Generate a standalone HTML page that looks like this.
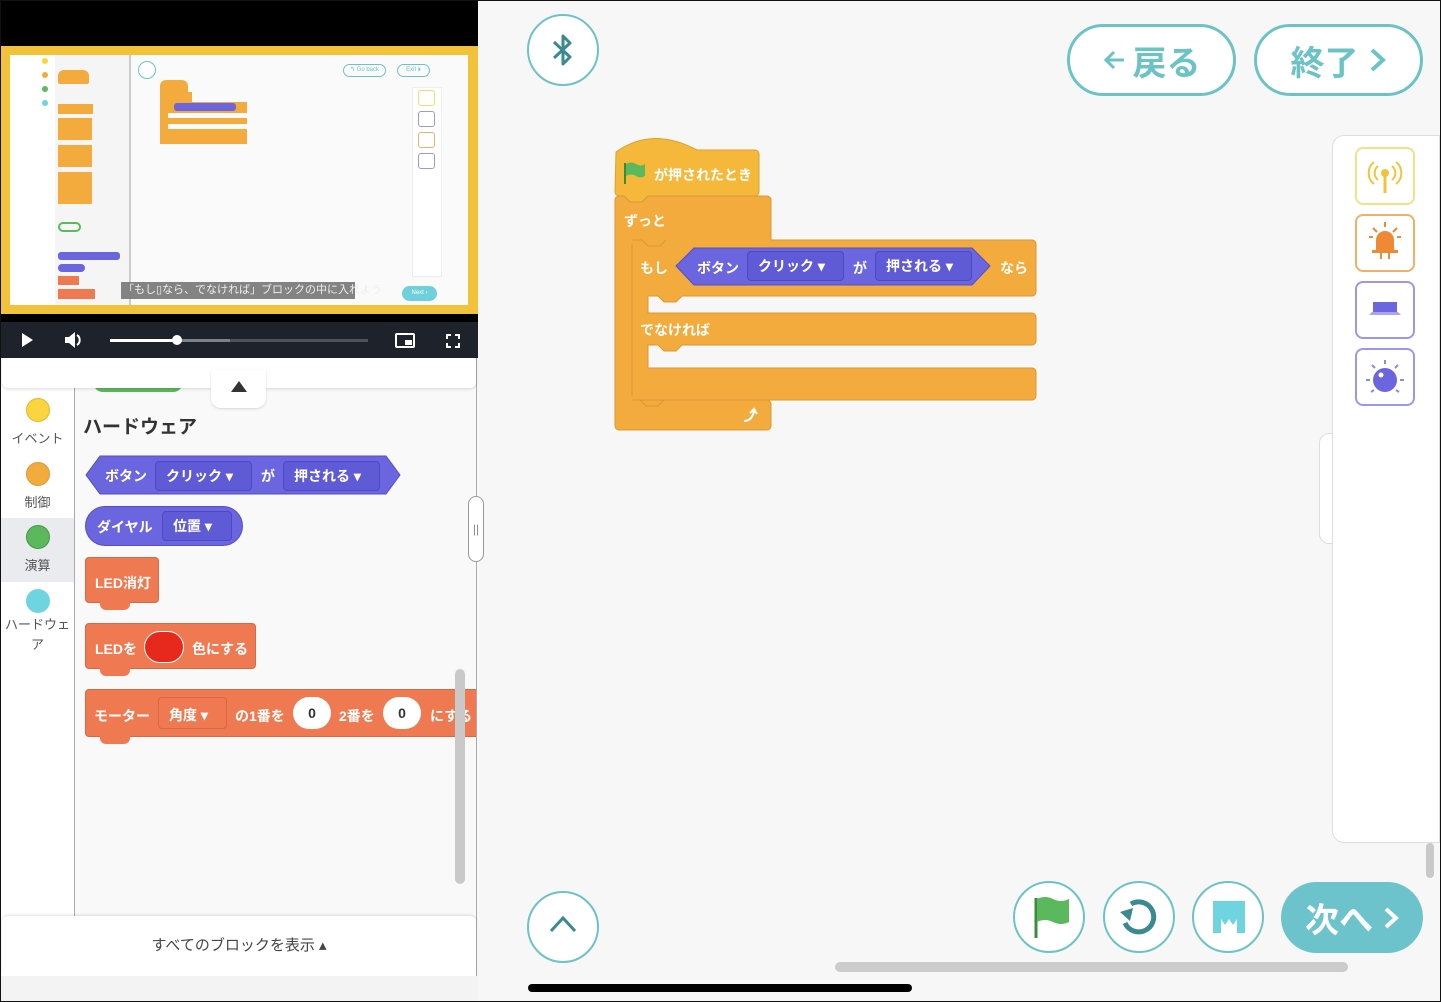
<!DOCTYPE html>
<html><head><meta charset="utf-8"><style>
*{margin:0;padding:0;box-sizing:border-box}
body{width:1441px;height:1002px;overflow:hidden;background:#f7f7f7;position:relative;font-family:"Liberation Sans","Noto Sans CJK JP",sans-serif}
.a{position:absolute}
.t{color:#fff;font-weight:bold;font-size:14px;white-space:nowrap}
.circ{border:2px solid #6cc3c6;border-radius:50%;background:#fff}
.pill{border:3px solid #6cc3c6;border-radius:40px;background:#fff;color:#6cc3c6;font-weight:bold;font-size:34px;display:flex;align-items:center;justify-content:center}
.dd{background:#5f5ad6;border:1px solid #4e49c2;border-radius:4px;height:30px;top:6px;display:flex;align-items:center;padding:0 10px;color:#fff;font-weight:bold;font-size:14px}
.cat{width:75px;text-align:center;font-size:13px;color:#555}
.cat i{display:block;width:24px;height:24px;border-radius:50%;margin:0 auto 6px}
.ib{width:60px;height:58px;border-radius:8px;background:#fff;border:2px solid}
</style></head><body>
<div class="a" style="left:0;top:0;width:1441px;height:1002px;border:1px solid #111;z-index:50;pointer-events:none"></div>

<div class="a" style="left:0;top:0;width:478px;height:1002px;background:#f9f9f9"></div>
<div class="a" style="left:0;top:0;width:75px;height:1002px;background:#fff;border-right:1px solid #aaa"></div>
<div class="a" style="left:0;top:518px;width:74px;height:64px;background:#e9ebef"></div>
<div class="a cat" style="left:0;top:398px"><i style="background:#fbd53f;border:1px solid #e0b92c"></i>イベント</div>
<div class="a cat" style="left:0;top:462px"><i style="background:#f3ab3d;border:1px solid #d99a34"></i>制御</div>
<div class="a cat" style="left:0;top:525px"><i style="background:#5cb85c;border:1px solid #3f9a3f"></i>演算</div>
<div class="a cat" style="left:0;top:589px;line-height:20px"><i style="background:#6dd4e0;margin-bottom:2px"></i>ハードウェ<br>ア</div>
<div class="a" style="left:83px;top:412px;font-size:19px;font-weight:bold;color:#333">ハードウェア</div>
<svg class="a" style="left:84px;top:455px" width="318" height="40"><polygon points="16,1 302,1 316,20 302,39 16,39 2,20" fill="#6b66e0" stroke="#544fc8"/></svg>
<div class="a t" style="left:105px;top:466px">ボタン</div>
<div class="a dd" style="left:155px;top:461px;width:97px">クリック ▾</div>
<div class="a t" style="left:261px;top:466px">が</div>
<div class="a dd" style="left:283px;top:461px;width:97px">押される ▾</div>
<div class="a" style="left:85px;top:506px;width:158px;height:40px;border-radius:20px;background:#6b66e0;border:1px solid #544fc8"></div>
<div class="a t" style="left:97px;top:517px">ダイヤル</div>
<div class="a dd" style="left:162px;top:511px;width:70px">位置 ▾</div>
<div class="a" style="left:85px;top:557px;width:74px;height:46px;background:#ef7a52;border:1px solid #d56a45;border-radius:4px"></div>
<div class="a" style="left:100px;top:602px;width:30px;height:8px;background:#ef7a52;border-radius:0 0 6px 6px"></div>
<div class="a t" style="left:95px;top:573px">LED消灯</div>
<div class="a" style="left:85px;top:623px;width:171px;height:46px;background:#ef7a52;border:1px solid #d56a45;border-radius:4px"></div>
<div class="a" style="left:100px;top:668px;width:30px;height:8px;background:#ef7a52;border-radius:0 0 6px 6px"></div>
<div class="a t" style="left:95px;top:639px">LEDを</div>
<div class="a" style="left:144px;top:631px;width:40px;height:32px;border-radius:16px;background:#e6281d;border:1px solid #fff"></div>
<div class="a t" style="left:192px;top:639px">色にする</div>
<div class="a" style="left:85px;top:689px;width:392px;height:48px;background:#ef7a52;border:1px solid #d56a45;border-radius:4px 0 0 4px"></div>
<div class="a" style="left:100px;top:736px;width:30px;height:8px;background:#ef7a52;border-radius:0 0 6px 6px"></div>
<div class="a t" style="left:94px;top:706px">モーター</div>
<div class="a" style="left:158px;top:697px;width:69px;height:32px;border:1px solid #d56a45;border-radius:4px;color:#fff;font-weight:bold;font-size:14px;padding:7px 10px">角度 ▾</div>
<div class="a t" style="left:235px;top:706px">の1番を</div>
<div class="a" style="left:293px;top:697px;width:38px;height:32px;border-radius:16px;background:#fff;font-weight:bold;font-size:14px;text-align:center;line-height:32px;color:#333">0</div>
<div class="a t" style="left:339px;top:706px">2番を</div>
<div class="a" style="left:383px;top:697px;width:38px;height:32px;border-radius:16px;background:#fff;font-weight:bold;font-size:14px;text-align:center;line-height:32px;color:#333">0</div>
<div class="a t" style="left:430px;top:706px">にする</div>
<div class="a" style="left:455px;top:669px;width:10px;height:215px;border-radius:5px;background:#c9c9c9"></div>
<div class="a" style="left:476px;top:0;width:1px;height:1002px;background:#aaa"></div>
<div class="a" style="left:468px;top:496px;width:16px;height:66px;border-radius:8px;background:#fff;border:1px solid #999;color:#888;font-size:12px;text-align:center;line-height:64px">||</div>
<div class="a" style="left:93px;top:380px;width:90px;height:12px;background:#5cb85c;border-radius:0 0 10px 10px"></div>
<div class="a" style="left:2px;top:358px;width:474px;height:30px;background:#fff;border-radius:0 0 6px 6px;box-shadow:0 1px 3px rgba(0,0,0,.15)"></div>
<div class="a" style="left:211px;top:370px;width:55px;height:38px;background:#fff;border-radius:0 0 10px 10px;box-shadow:0 1px 2px rgba(0,0,0,.15)"></div>
<div class="a" style="left:231px;top:381px;width:0;height:0;border-left:8px solid transparent;border-right:8px solid transparent;border-bottom:11px solid #333"></div>
<div class="a" style="left:2px;top:916px;width:474px;height:60px;background:#fff;border-radius:6px 6px 0 0;box-shadow:0 -1px 3px rgba(0,0,0,.12);text-align:center;font-size:15px;color:#444;line-height:60px">すべてのブロックを表示 ▴</div>

<div class="a" style="left:0;top:0;width:478px;height:322px;background:#000"></div>
<div class="a" style="left:0;top:46px;width:478px;height:268px;background:#f2c23a"></div>
<div class="a" style="left:10px;top:55px;width:458px;height:250px;background:#fafafa"></div>
<div class="a" style="left:10px;top:55px;width:45px;height:250px;background:#fff"></div>
<div class="a" style="left:55px;top:55px;width:76px;height:250px;background:#f5f5f5;border-right:2px solid #ccc"></div>
<div class="a" style="left:42px;top:58px;width:6px;height:6px;border-radius:50%;background:#fbd53f"></div>
<div class="a" style="left:42px;top:72px;width:6px;height:6px;border-radius:50%;background:#f3ab3d"></div>
<div class="a" style="left:42px;top:86px;width:6px;height:6px;border-radius:50%;background:#5cb85c"></div>
<div class="a" style="left:42px;top:100px;width:6px;height:6px;border-radius:50%;background:#6dd4e0"></div>
<div class="a" style="left:58px;top:70px;width:31px;height:14px;background:#f3ab3d;border-radius:6px 6px 2px 2px"></div>
<div class="a" style="left:58px;top:104px;width:35px;height:10px;background:#f3ab3d"></div>
<div class="a" style="left:58px;top:118px;width:34px;height:22px;background:#f3ab3d"></div>
<div class="a" style="left:58px;top:145px;width:34px;height:22px;background:#f3ab3d"></div>
<div class="a" style="left:58px;top:172px;width:34px;height:32px;background:#f3ab3d"></div>
<div class="a" style="left:58px;top:222px;width:23px;height:10px;border:2px solid #5cb85c;border-radius:5px"></div>
<div class="a" style="left:58px;top:252px;width:62px;height:8px;background:#6b66e0;border-radius:3px"></div>
<div class="a" style="left:58px;top:264px;width:27px;height:8px;background:#6b66e0;border-radius:4px"></div>
<div class="a" style="left:58px;top:276px;width:21px;height:9px;background:#ef7a52"></div>
<div class="a" style="left:58px;top:289px;width:37px;height:10px;background:#ef7a52"></div>
<div class="a circ" style="left:138px;top:61px;width:18px;height:18px;border-width:1px"></div>
<div class="a" style="left:160px;top:80px;width:28px;height:12px;background:#f3ab3d;border-radius:6px 6px 0 0"></div>
<div class="a" style="left:160px;top:92px;width:32px;height:10px;background:#f3ab3d"></div>
<div class="a" style="left:160px;top:102px;width:87px;height:42px;background:#f3ab3d"></div>
<div class="a" style="left:174px;top:103px;width:62px;height:8px;background:#6b66e0;border-radius:3px"></div>
<div class="a" style="left:168px;top:113px;width:79px;height:5px;background:#fafafa"></div>
<div class="a" style="left:168px;top:124px;width:79px;height:5px;background:#fafafa"></div>
<div class="a" style="left:343px;top:64px;width:43px;height:13px;border:1px solid #6cc3c6;border-radius:7px;font-size:6px;color:#6cc3c6;text-align:center;line-height:11px">↰ Go back</div>
<div class="a" style="left:397px;top:64px;width:33px;height:13px;border:1px solid #6cc3c6;border-radius:7px;font-size:6px;color:#6cc3c6;text-align:center;line-height:11px">Exit ⏵</div>
<div class="a" style="left:412px;top:87px;width:30px;height:190px;background:#fff;border:1px solid #eee"></div>
<div class="a" style="left:418px;top:90px;width:17px;height:16px;border:1px solid #f5dc6a;border-radius:3px"></div>
<div class="a" style="left:418px;top:111px;width:17px;height:16px;border:1px solid #9d98e6;border-radius:3px"></div>
<div class="a" style="left:418px;top:132px;width:17px;height:16px;border:1px solid #f0b06a;border-radius:3px"></div>
<div class="a" style="left:418px;top:153px;width:17px;height:16px;border:1px solid #9d98e6;border-radius:3px"></div>
<div class="a" style="left:402px;top:286px;width:35px;height:15px;background:#6dd0da;border-radius:8px;font-size:6px;color:#fff;text-align:center;line-height:15px">Next ›</div>
<div class="a" style="left:121px;top:282px;width:234px;height:17px;background:#777;color:#eee;font-size:11px;line-height:17px;white-space:nowrap;padding-left:2px;opacity:.9">「もし▯なら、でなければ」ブロックの中に入れよう</div>
<div class="a" style="left:0;top:322px;width:478px;height:36px;background:#1e222b"></div>
<div class="a" style="left:22px;top:333px;width:0;height:0;border-top:7px solid transparent;border-bottom:7px solid transparent;border-left:11px solid #fff"></div>
<svg class="a" style="left:64px;top:331px" width="20" height="18"><path d="M1 6h4l6-5v16l-6-5H1z" fill="#fff"/><path d="M13 4a6 6 0 0 1 0 10" stroke="#fff" stroke-width="2" fill="none"/></svg>
<div class="a" style="left:110px;top:339px;width:258px;height:3px;background:#4d535e"></div>
<div class="a" style="left:110px;top:339px;width:120px;height:3px;background:#7b818c"></div>
<div class="a" style="left:110px;top:339px;width:67px;height:3px;background:#fff"></div>
<div class="a" style="left:172px;top:335px;width:10px;height:10px;border-radius:50%;background:#fff"></div>
<div class="a" style="left:395px;top:333px;width:20px;height:15px;border:2px solid #fff;border-radius:2px"></div>
<div class="a" style="left:405px;top:340px;width:7px;height:5px;background:#fff"></div>
<svg class="a" style="left:446px;top:334px" width="14" height="14" fill="none" stroke="#fff" stroke-width="2"><path d="M1 5V1h4M9 1h4v4M13 9v4H9M5 13H1V9"/></svg>

<div class="a circ" style="left:527px;top:14px;width:72px;height:72px"></div>
<svg class="a" style="left:551px;top:32px" width="24" height="36" fill="none" stroke="#3a8a8f" stroke-width="3" stroke-linejoin="round"><path d="M3 10l16 15-7 7V4l7 7L3 26"/></svg>
<div class="a pill" style="left:1067px;top:24px;width:169px;height:72px"><svg width="22" height="22" style="margin-right:8px" fill="none" stroke="#6cc3c6" stroke-width="3"><path d="M11 3L3 11l8 8M3 11h18"/></svg>戻る</div>
<div class="a pill" style="left:1254px;top:24px;width:169px;height:72px">終了<svg width="18" height="26" style="margin-left:10px" fill="none" stroke="#6cc3c6" stroke-width="4"><path d="M3 3l11 10L3 23"/></svg></div>
<div class="a" style="left:1319px;top:433px;width:20px;height:111px;background:#fff;border:1px solid #ddd;border-radius:10px 0 0 10px"></div>
<div class="a" style="left:1332px;top:135px;width:108px;height:708px;background:#fff;border:1px solid #ddd;border-radius:12px 0 0 12px"></div>
<div class="a" style="left:1426px;top:843px;width:8px;height:35px;border-radius:4px;background:#c9c9c9"></div>
<div class="a ib" style="left:1355px;top:147px;border-color:#f5e08a"></div>
<svg class="a" style="left:1365px;top:155px" width="40" height="42" fill="none" stroke="#f2c43a" stroke-width="2"><circle cx="20" cy="18" r="3" fill="#f2c43a"/><path d="M20 18v20" stroke-width="3"/><path d="M13 11a9 9 0 0 0 0 14M27 11a9 9 0 0 1 0 14M9 7a14 14 0 0 0 0 22M31 7a14 14 0 0 1 0 22"/></svg>
<div class="a ib" style="left:1355px;top:214px;border-color:#f0b06a"></div>
<svg class="a" style="left:1365px;top:220px" width="40" height="46"><path d="M11 30v-10a9 9 0 0 1 18 0v10z" fill="#ee8a35"/><rect x="7" y="30" width="26" height="3" fill="#ee8a35"/><path d="M16 33v6M24 33v6M20 2v5M8 8l4 4M32 8l-4 4M4 17h4M36 17h-4" stroke="#ee8a35" stroke-width="2"/></svg>
<div class="a ib" style="left:1355px;top:281px;border-color:#9d98e6"></div>
<svg class="a" style="left:1363px;top:295px" width="44" height="24"><rect x="10" y="7" width="24" height="10" fill="#6b66e0"/><path d="M6 20h32l-3-3H9z" fill="#a9a5ec"/></svg>
<div class="a ib" style="left:1355px;top:348px;border-color:#9d98e6"></div>
<svg class="a" style="left:1363px;top:355px" width="44" height="44"><circle cx="22" cy="25" r="12" fill="#6b66e0"/><circle cx="18" cy="20" r="2.5" fill="#fff"/><path d="M22 5v4M9 10l3 3M35 10l-3 3M3 25h4M41 25h-4M8 37l3-2M36 37l-3-2" stroke="#8e89e6" stroke-width="2"/></svg>

<svg class="a" style="left:612px;top:130px" width="430" height="305">
<path d="M4 22 Q40 -4 85 20 H143 a4 4 0 0 1 4 4 V62 a4 4 0 0 1 -4 4 H36 l-6 6 H18 l-6 -6 H7 a4 4 0 0 1 -4 -4 Z" fill="#f5b83b" stroke="#dba231"/>
<path d="M7 66 H12 l6 6 H30 l6 -6 H155 a4 4 0 0 1 4 4 V110 H420 a4 4 0 0 1 4 4 V162 a4 4 0 0 1 -4 4 H70 l-6 6 H52 l-6 -6 H36 V183 H420 a4 4 0 0 1 4 4 V211 a4 4 0 0 1 -4 4 H70 l-6 6 H52 l-6 -6 H36 V238 H420 a4 4 0 0 1 4 4 V266 a4 4 0 0 1 -4 4 H52 l-6 6 H34 l-6 -6 H20 V270 H155 a4 4 0 0 1 4 4 V296 a4 4 0 0 1 -4 4 H7 a4 4 0 0 1 -4 -4 V70 a4 4 0 0 1 4 -4 Z" fill="#f3ab3d" stroke="#d99a34"/>
<path d="M20 114 V266" stroke="#d99a34" fill="none"/>
<path d="M20 110 H30 l6 6 H48 l6 -6" stroke="#d99a34" fill="none"/>
<polygon points="82,118 360,118 378,136 360,155 82,155 64,136" fill="#6b66e0" stroke="#544fc8"/>
<path d="M13 33 V54" stroke="#3c8b3c" stroke-width="2"/><path d="M14 34 q5 -3 10 0 t9 0 V46 q-5 3 -9 0 t-10 0 Z" fill="#5cb85c"/>
<path d="M132 291 q8 0 10 -10 m-4 2 l4 -4 l3 5" stroke="#fff" stroke-width="2" fill="none"/>
</svg>
<div class="a t" style="left:654px;top:165px;font-size:14px">が押されたとき</div>
<div class="a t" style="left:624px;top:211px">ずっと</div>
<div class="a t" style="left:640px;top:258px">もし</div>
<div class="a t" style="left:697px;top:258px">ボタン</div>
<div class="a dd" style="left:747px;top:251px;width:97px">クリック ▾</div>
<div class="a t" style="left:853px;top:258px">が</div>
<div class="a dd" style="left:875px;top:251px;width:97px">押される ▾</div>
<div class="a t" style="left:1000px;top:258px">なら</div>
<div class="a t" style="left:640px;top:320px">でなければ</div>

<div class="a circ" style="left:527px;top:891px;width:72px;height:72px"></div>
<svg class="a" style="left:549px;top:915px" width="28" height="18" fill="none" stroke="#3a8a8f" stroke-width="3"><path d="M2 16L14 3l12 13"/></svg>
<div class="a circ" style="left:1013px;top:881px;width:72px;height:72px"></div>
<svg class="a" style="left:1032px;top:894px" width="40" height="46"><path d="M4 4 V44" stroke="#3c8b3c" stroke-width="3"/><path d="M5 5 q8 -4 16 0 t16 0 V28 q-8 4 -16 0 t-16 0 Z" fill="#5cb85c"/></svg>
<div class="a circ" style="left:1103px;top:881px;width:72px;height:72px"></div>
<svg class="a" style="left:1117px;top:895px" width="44" height="44" fill="none"><path d="M14 9 A15 15 0 1 1 8 28" stroke="#3a8a8f" stroke-width="5"/><path d="M3 17 l13 -4 -3 13z" fill="#3a8a8f"/></svg>
<div class="a circ" style="left:1192px;top:881px;width:72px;height:72px"></div>
<svg class="a" style="left:1213px;top:901px" width="32" height="32"><path d="M0 0H32V32H24V18L20 24 16 18 12 24 8 18V32H0Z" fill="#6dd4e0"/></svg>
<div class="a" style="left:1281px;top:882px;width:142px;height:71px;border-radius:36px;background:#6cc3cc;color:#fff;font-weight:bold;font-size:34px;display:flex;align-items:center;justify-content:center">次へ<svg width="16" height="24" style="margin-left:10px" fill="none" stroke="#fff" stroke-width="4"><path d="M3 3l10 9L3 21"/></svg></div>
<div class="a" style="left:835px;top:962px;width:513px;height:10px;border-radius:5px;background:#ccc"></div>
<div class="a" style="left:0;top:976px;width:478px;height:26px;background:#f3f3f3"></div>
<div class="a" style="left:528px;top:984px;width:384px;height:8px;border-radius:4px;background:#000"></div>
</body></html>
